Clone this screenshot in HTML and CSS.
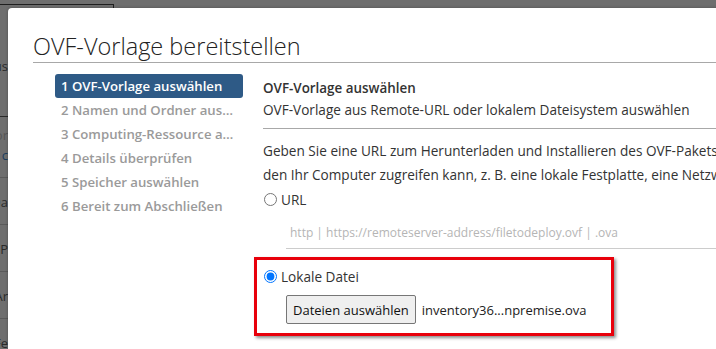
FILE: index.html
```html
<!DOCTYPE html>
<html lang="de">
<head>
  <meta charset="UTF-8" />
  <title>OVF-Vorlage bereitstellen</title>
  <link rel="stylesheet" href="styles.css">
</head>
<body>
  <!-- page under the dimmed overlay, only its edges are visible -->
  <div class="page">
    <div class="page-top"></div>
    <div class="page-side">
      <div class="page-row dark">Vorlagen aus</div>
      <div class="page-row sep-dark"></div>
      <div class="page-row muted">Vor</div>
      <div class="page-row link">c</div>
      <div class="page-row sep"></div>
      <div class="page-row">Da</div>
      <div class="page-row sep"></div>
      <div class="page-row">CP</div>
      <div class="page-row sep"></div>
      <div class="page-row">Ar</div>
      <div class="page-row sep"></div>
      <div class="page-row">Fe</div>
    </div>
  </div>

  <div class="modal">
    <h1 class="modal-title">OVF-Vorlage bereitstellen</h1>

    <div class="wizard">
      <ul class="steps">
        <li class="step active">1 OVF-Vorlage auswählen</li>
        <li class="step">2 Namen und Ordner auswählen</li>
        <li class="step">3 Computing-Ressource auswählen</li>
        <li class="step">4 Details überprüfen</li>
        <li class="step">5 Speicher auswählen</li>
        <li class="step">6 Bereit zum Abschließen</li>
      </ul>

      <div class="content">
        <div class="content-head">
          <div class="content-title">OVF-Vorlage auswählen</div>
          <div class="content-sub">OVF-Vorlage aus Remote-URL oder lokalem Dateisystem auswählen</div>
        </div>

        <p class="hint">Geben Sie eine URL zum Herunterladen und Installieren des OVF-Pakets aus dem Internet ein, oder navigieren Sie zu einem Speicherort, auf<br>den Ihr Computer zugreifen kann, z. B. eine lokale Festplatte, eine Netzwerkfreigabe oder ein CD/DVD-Laufwerk.</p>

        <label class="choice">
          <input type="radio" name="source" />
          <span>URL</span>
        </label>
        <div class="url-field">
          <input type="text" placeholder="http | https://remoteserver-address/filetodeploy.ovf | .ova" />
        </div>

        <div class="local-box">
          <label class="choice">
            <input type="radio" name="source" checked />
            <span>Lokale Datei</span>
          </label>
          <div class="file-row">
            <button class="file-btn">Dateien auswählen</button>
            <span class="file-name">inventory36...npremise.ova</span>
          </div>
        </div>
      </div>
    </div>
  </div>
</body>
</html>
```

FILE: styles.css
```css
body {
  margin: 0;
  width: 716px;
  height: 349px;
  overflow: hidden;
  background: #6e6e6e;
  font-family: 'Open Sans', sans-serif;
  position: relative;
}
.page {
  font-size: 13px;
  color: #2a2a2a;
}
.page-top {
  width: 113px;
  height: 10px;
  margin-top: 4px;
  border-top: 1px solid #1e1e1e;
  border-right: 1px solid #1e1e1e;
}
.page-side {
  width: 8px;
  overflow: hidden;
  padding-top: 41px;
}
.page-row {
  display: flex;
  justify-content: flex-end;
  white-space: nowrap;
  height: 20px;
  line-height: 20px;
}
.page-row.muted {
  color: #555;
  margin-top: 8px;
}
.page-row.link {
  color: #1c3d5e;
}
.page-row.sep-dark {
  height: 0;
  border-top: 1px solid #2a2a2a;
  margin-top: 40px;
}
.page-row.sep {
  height: 0;
  border-top: 1px solid #5a5a5a;
  margin: 12px 0 14px;
}
.modal {
  position: absolute;
  top: 8px;
  left: 8px;
  width: 900px;
  height: 400px;
  background: #fff;
  border-radius: 4px 0 0 0;
  box-shadow: 0 0 3px rgba(0,0,0,0.3);
  padding: 0 0 0 25px;
  box-sizing: border-box;
}
.modal-title {
  margin: 0;
  padding-top: 23px;
  font-size: 23.5px;
  font-weight: 300;
  line-height: 31px;
  color: #222;
  border-bottom: 1px solid #a8a8a8;
}
.wizard {
  display: flex;
  padding: 11px 0 0 22px;
}
.steps {
  list-style: none;
  margin: 0;
  padding: 0;
  width: 188px;
  flex-shrink: 0;
}
.step {
  height: 24px;
  line-height: 24px;
  padding: 0 6px;
  font-size: 13.2px;
  font-weight: 600;
  color: #9a9a9a;
  white-space: nowrap;
  overflow: hidden;
  text-overflow: ellipsis;
  border-radius: 3px;
}
.step.active {
  background: #2e5a86;
  color: #fff;
}
.content {
  margin-left: 20px;
  flex: 1;
  font-size: 13.6px;
  color: #333;
}
.content-head {
  border-bottom: 1px solid #a8a8a8;
  padding: 3px 0 7px;
}
.content-title {
  font-size: 13.4px;
  font-weight: 600;
  line-height: 22px;
}
.content-sub {
  line-height: 22px;
}
.hint {
  margin: 10px 0 0;
  line-height: 24px;
  white-space: nowrap;
}
.choice {
  display: flex;
  align-items: center;
  height: 24px;
}
.choice input {
  margin: 0 4px 0 1px;
}
.url-field {
  margin: 10px 0 0 23px;
}
.url-field input {
  width: 100%;
  border: none;
  border-bottom: 1px solid #ccc;
  font-family: 'Open Sans', sans-serif;
  font-size: 12px;
  padding: 3px 4px 7px;
  outline: none;
}
.url-field input::placeholder {
  color: #b5b5b5;
}
.local-box {
  box-sizing: border-box;
  width: 360px;
  margin: 8px 0 0 -9px;
  border: 3px solid #e8000b;
  box-shadow: 2px 2px 3px rgba(0,0,0,0.45);
  padding: 4px 0 9px 6px;
}
.file-row {
  display: flex;
  align-items: center;
  margin: 7px 0 0 23px;
}
.file-btn {
  height: 29px;
  padding: 0 6px;
  background: #efefef;
  border: 1px solid #767676;
  border-radius: 2px;
  font-family: 'Open Sans', sans-serif;
  font-size: 13px;
  color: #111;
}
.file-name {
  margin-left: 6px;
  font-size: 13px;
  color: #222;
}
```
